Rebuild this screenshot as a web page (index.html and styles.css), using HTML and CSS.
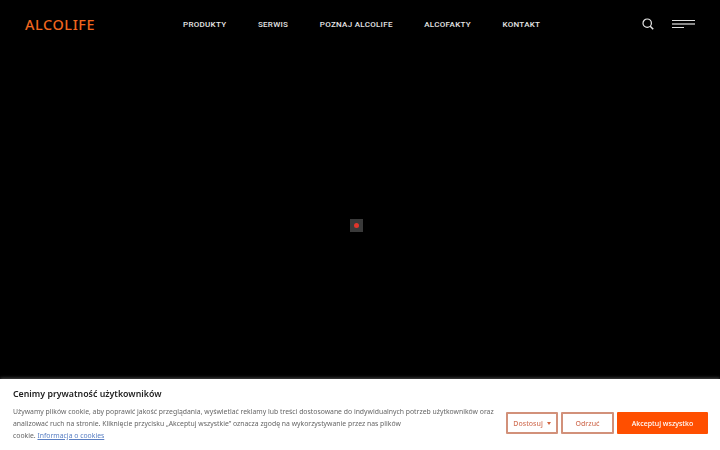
FILE: index.html
```html
<!DOCTYPE html>
<html lang="pl">

<head>
    <title>Alcolife</title>
    <link rel="stylesheet" href="styles.css">
</head>

<body>
    <div class="navbar">
        <a class="logo" href="#">ALCOLIFE</a>
        <div class="menu">
            <a href="#">PRODUKTY</a>
            <a href="#">SERWIS</a>
            <a href="#">POZNAJ ALCOLIFE</a>
            <a href="#">ALCOFAKTY</a>
            <a href="#">KONTAKT</a>
        </div>
        <div class="navbar-tools">
            <svg class="search-icon" width="12" height="12" viewBox="0 0 12 12" fill="none" stroke="#e8e8e8">
                <circle cx="5.2" cy="5.2" r="4.2" stroke-width="1.2"/>
                <path d="M8.2 8.2 L11.2 11.2" stroke-width="1.5"/>
            </svg>
            <div class="burger">
                <span class="burger-line"></span>
                <span class="burger-line burger-line-mid"></span>
                <span class="burger-line burger-line-short"></span>
            </div>
        </div>
    </div>

    <div class="loader"><span class="loader-dot"></span></div>

    <div class="cookie-bar">
        <div class="cookie-text">
            <h3>Cenimy prywatność użytkowników</h3>
            <p>Używamy plików cookie, aby poprawić jakość przeglądania, wyświetlać reklamy lub treści dostosowane do indywidualnych potrzeb użytkowników oraz<br>analizować ruch na stronie. Kliknięcie przycisku „Akceptuj wszystkie” oznacza zgodę na wykorzystywanie przez nas plików<br>cookie. <a href="#">Informacja o cookies</a></p>
        </div>
        <div class="cookie-buttons">
            <button class="cookie-btn cookie-btn-custom" type="button">Dostosuj <span class="caret"></span></button>
            <button class="cookie-btn cookie-btn-reject" type="button">Odrzuć</button>
            <button class="cookie-btn cookie-btn-main" type="button">Akceptuj wszystko</button>
        </div>
    </div>
</body>

</html>
```

FILE: styles.css
```css
html, body {
    height: 100%;
}

body {
    margin: 0;
    background-color: #000;
    font-family: "Noto Sans", "Liberation Sans", sans-serif;
    overflow: hidden;
}

a {
    text-decoration: none;
}

.navbar {
    display: flex;
    align-items: center;
    height: 48px;
    padding: 0 25px;
}

.logo {
    width: 158px;
    color: #f0661e;
    font-size: 14.4px;
    font-weight: 500;
    letter-spacing: 0.6px;
}

.menu {
    display: flex;
    gap: 31.5px;
}

.menu a {
    color: #e6e6e6;
    font-family: Roboto, "Liberation Sans", sans-serif;
    font-size: 8px;
    font-weight: 500;
    letter-spacing: 0.3px;
}

.navbar-tools {
    display: flex;
    align-items: center;
    gap: 18px;
    margin-left: auto;
}

.search-icon {
    display: block;
}

.burger {
    display: flex;
    flex-direction: column;
    gap: 2px;
    width: 23px;
}

.burger-line {
    display: block;
    height: 1px;
    background-color: #ddd;
}

.burger-line-mid {
    height: 2px;
    background-color: #888;
}

.burger-line-short {
    width: 12px;
}

.loader {
    position: absolute;
    left: 350px;
    top: 219px;
    display: flex;
    align-items: center;
    justify-content: center;
    width: 13px;
    height: 13px;
    background-color: #3a3a3a;
}

.loader-dot {
    width: 5px;
    height: 5px;
    border-radius: 50%;
    background-color: #e0352b;
}

.cookie-bar {
    position: fixed;
    left: 0;
    right: 0;
    bottom: 0;
    display: flex;
    justify-content: space-between;
    height: 71px;
    padding: 0 12px 0 13px;
    background-color: #fff;
    box-shadow: 0 -1px 3px rgba(255, 255, 255, 0.3);
}

.cookie-text {
    padding-top: 9px;
}

.cookie-text h3 {
    margin: 0 0 5px 0;
    color: #222;
    font-size: 8.8px;
    line-height: 13px;
    font-weight: 600;
}

.cookie-text p {
    margin: 0;
    color: #666;
    font-size: 6.85px;
    line-height: 12px;
}

.cookie-text a {
    color: #5b80c4;
    text-decoration: underline;
}

.cookie-buttons {
    display: flex;
    gap: 3px;
    align-self: flex-end;
    padding-bottom: 16px;
}

.cookie-btn {
    height: 22px;
    padding: 0;
    border: 2px solid #d2917a;
    border-radius: 1px;
    background-color: #fff;
    color: #d2745a;
    font-family: inherit;
    font-size: 7px;
    font-weight: 500;
}

.cookie-btn-custom {
    width: 52px;
}

.cookie-btn-reject {
    width: 53px;
}

.cookie-btn-main {
    width: 91px;
    border-color: #ff4f00;
    background-color: #ff4f00;
    color: #fff;
}

.caret {
    display: inline-block;
    margin-left: 2px;
    border-top: 3px solid #d2643f;
    border-left: 2.5px solid transparent;
    border-right: 2.5px solid transparent;
    vertical-align: middle;
}
```
